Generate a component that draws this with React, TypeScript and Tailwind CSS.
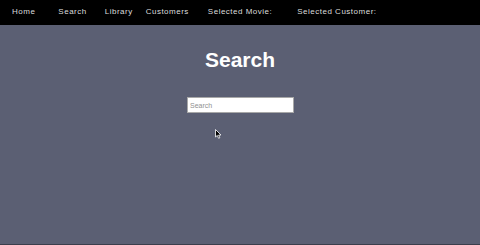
const navItems = [
  { label: 'Home', ml: 'ml-[12px]' },
  { label: 'Search', ml: 'ml-[23px]' },
  { label: 'Library', ml: 'ml-[18px]' },
  { label: 'Customers', ml: 'ml-[13px]' },
  { label: 'Selected Movie:', ml: 'ml-[19px]' },
  { label: 'Selected Customer:', ml: 'ml-[25px]' },
];

export default function App() {
  return (
    <div
      className="relative flex h-[245px] w-[480px] flex-col overflow-hidden bg-[#5b5f73]"
      style={{ fontFamily: '"Liberation Sans", Arial, sans-serif' }}
    >
      <nav className="flex h-[25px] shrink-0 items-center bg-black pb-[1px]">
        {navItems.map((item) => (
          <span key={item.label} className={`${item.ml} text-[8px] leading-none tracking-[0.5px] text-[#dcdcdc]`}>
            {item.label}
          </span>
        ))}
      </nav>

      <main className="flex flex-1 flex-col items-center border-b border-[#3b3e4c]">
        <h1 className="mt-[21px] text-[21px] font-bold leading-[28px] text-white">Search</h1>
        <input
          type="text"
          placeholder="Search"
          className="ml-[1px] mt-[23px] h-[16px] w-[107px] border border-[#a8a8a8] bg-white px-[2px] text-[7px] text-black outline-none placeholder:text-[#909090]"
        />
      </main>

      {/* mouse pointer */}
      <svg className="absolute left-[215px] top-[129px]" width="7" height="10" viewBox="0 0 7 10">
        <path d="M0.5 0.5 L0.5 8 L2.3 6.4 L3.6 9.3 L4.8 8.8 L3.6 6 L6 6 Z" fill="black" stroke="white" strokeWidth="0.8" />
      </svg>
    </div>
  );
}
